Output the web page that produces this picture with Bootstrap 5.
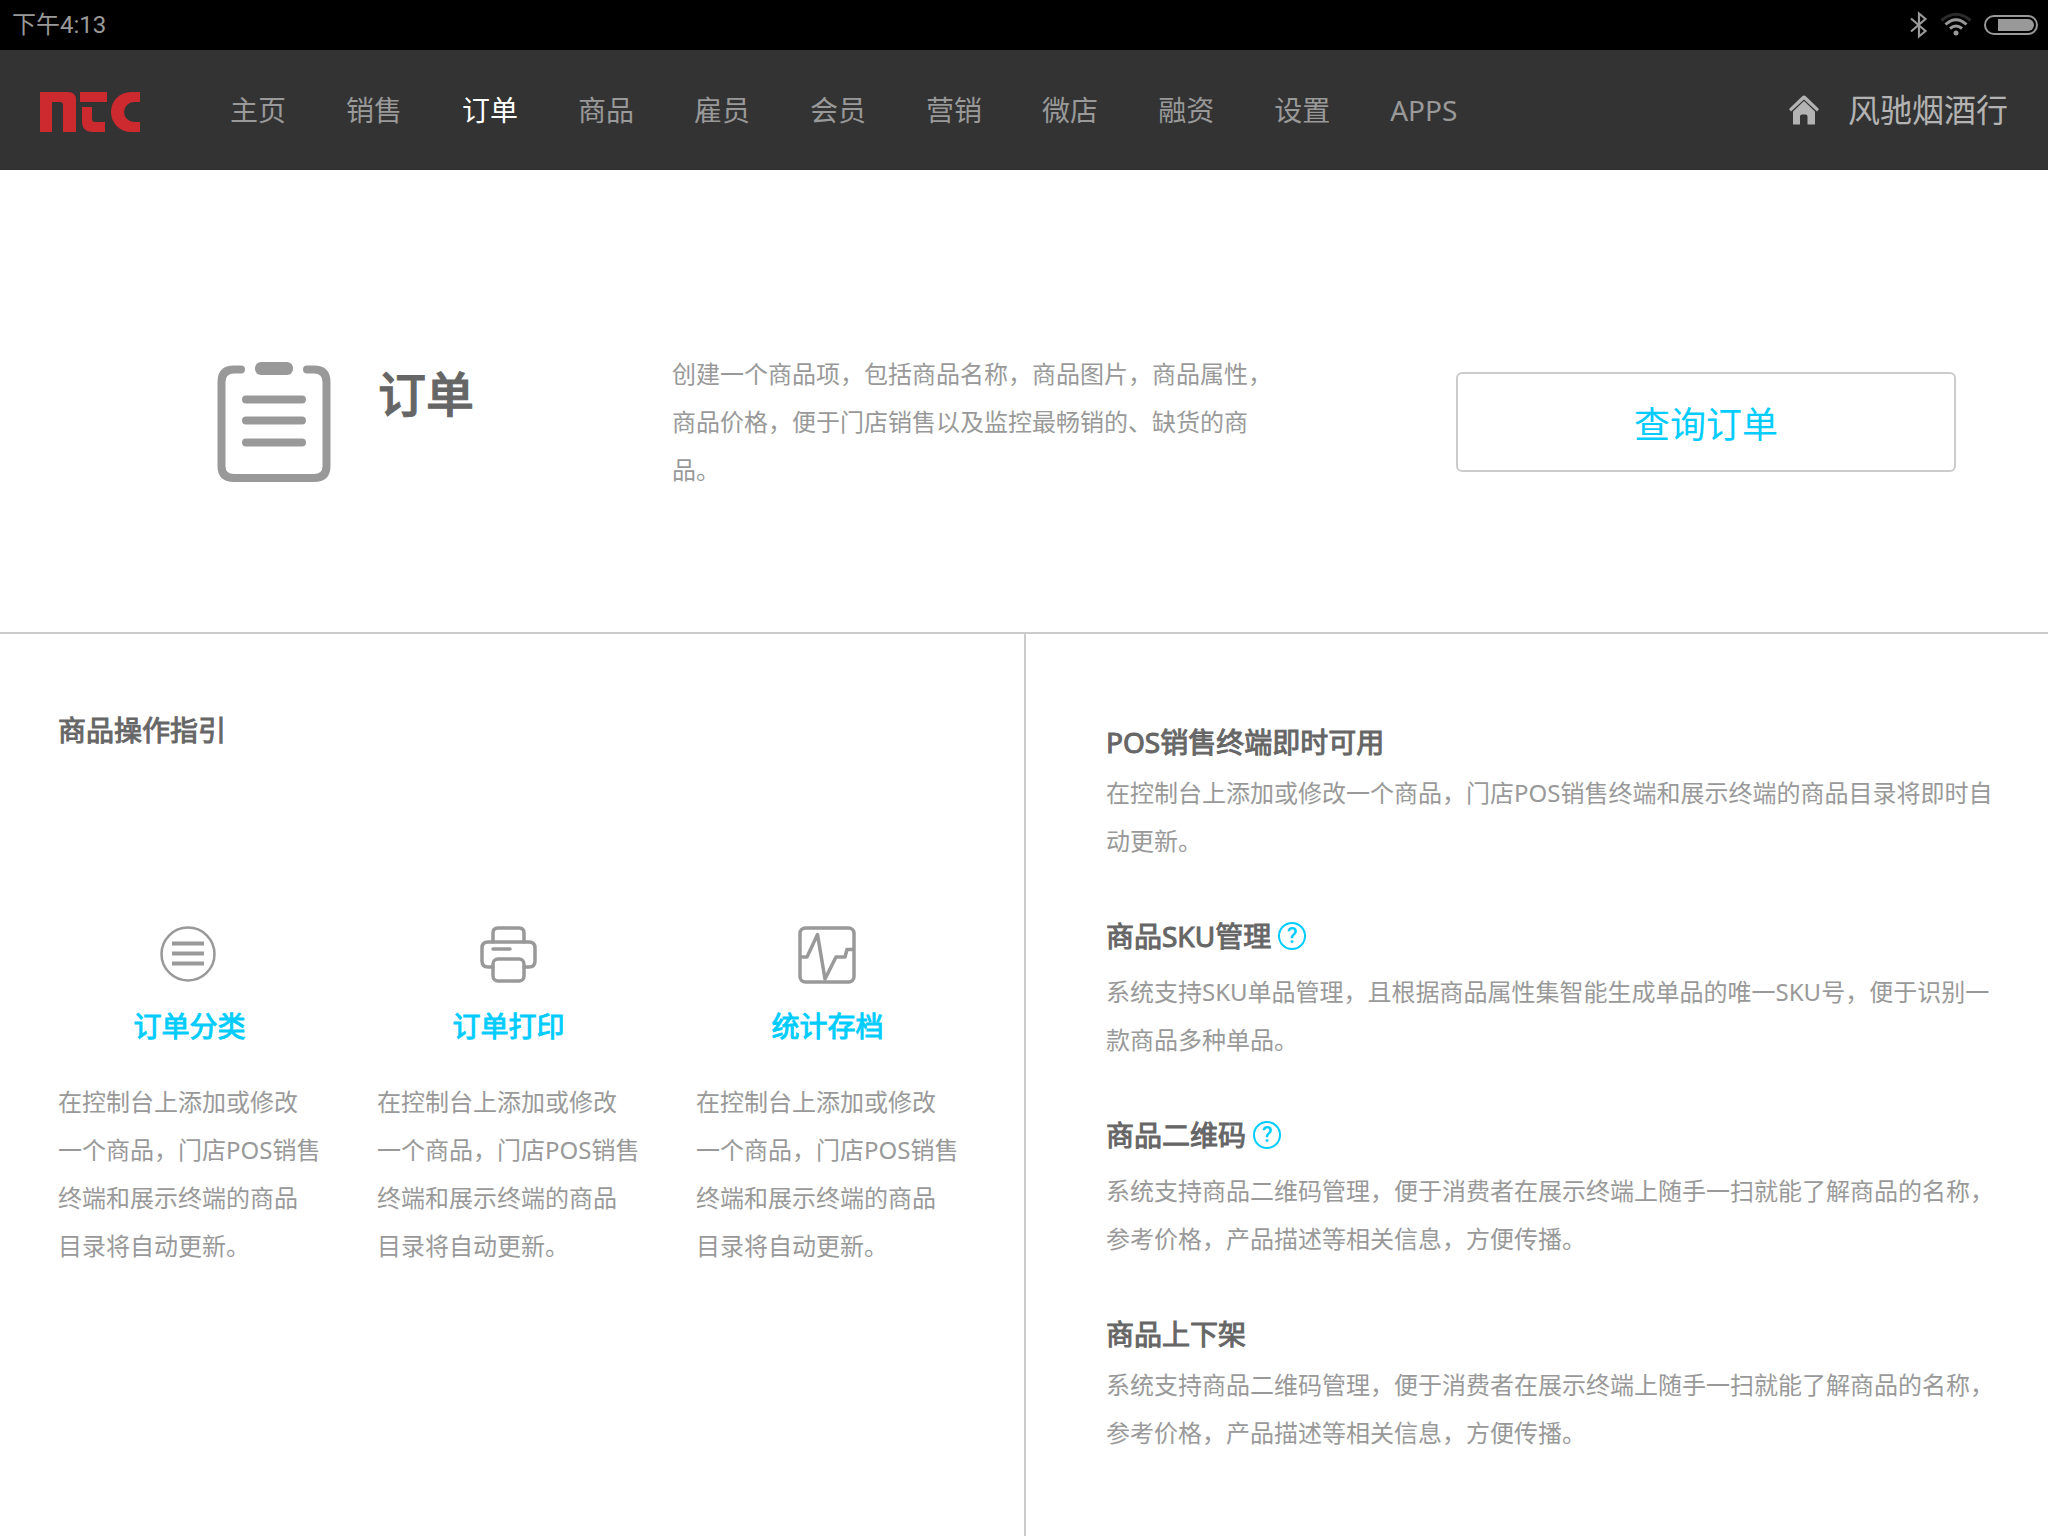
<!DOCTYPE html>
<html lang="zh-CN">
<head>
<meta charset="utf-8">
<meta name="viewport" content="width=device-width, initial-scale=1">
<title>订单</title>
<link href="https://cdn.jsdelivr.net/npm/bootstrap@5.3.0/dist/css/bootstrap.min.css" rel="stylesheet">
<style>
body{font-family:"Noto Sans","Noto Sans CJK SC",sans-serif;font-size:24px;line-height:48px;color:#999;background:#fff}
p{margin:0}
.status-bar{height:50px;background:#000;padding:0 10px 0 12px;font-family:Roboto,"Noto Sans CJK SC",sans-serif;color:#999;line-height:50px}
.top-bar{height:120px;background:#333;padding:0 40px}
.top-menu{margin-left:90px;gap:60px;font-size:28px}
.top-menu .nav-link{padding:0;color:#999}
.top-menu .nav-link.active{color:#fff}
.shop-link{font-size:32px;color:#b3b3b3;gap:28px}
.intro{padding:180px 92px 138px 216px;border-bottom:2px solid #ccc}
.intro-head{width:456px;gap:46px}
.intro-head svg{margin-top:11px}
.intro-head h1{font-size:48px;line-height:64px;color:#666;margin:12px 0 0}
.intro-text{width:600px}
.query-btn{width:500px;height:100px;margin-top:22px;padding:6px 0 0;border:2px solid #ccc;border-radius:6px;font-size:36px;color:#00ccff}
.query-btn:hover{background:#f5fdff;border-color:#ccc;color:#00ccff}
.guide{padding:72px 58px 0}
.notes{padding:84px 48px 72px 80px;border-left:2px solid #ccc}
h1{font-weight:500;-webkit-text-stroke:1px}
h2,h3{font-weight:400;-webkit-text-stroke:1px}
.sub-title{font-size:28px;line-height:48px;color:#666;margin:0}
.step-row{gap:56px;margin-top:170px}
.step-item{width:263px}
.step-item svg{width:60px;height:60px}
.step-item h3{font-size:28px;line-height:48px;margin:18px 0 28px}
.step-item h3 a{color:#00ccff;text-decoration:none}
.note-list{gap:47px}
.note-list .sub-title{margin-bottom:3px}
.note-list .with-help{margin-bottom:8px;gap:7px}
.help-btn{width:28px;height:28px;border:2px solid #00ccff;border-radius:50%;background:none;color:#00ccff;padding:0;font:500 22px/24px Roboto,sans-serif}
</style>
</head>
<body class="min-vh-100 d-flex flex-column">
<div class="status-bar d-flex justify-content-between align-items-center">
  <span>下午4:13</span>
  <div class="d-flex align-items-center">
    <svg width="20" height="28" viewBox="0 0 20 28" fill="none" stroke="#999" stroke-width="2.200" aria-label="蓝牙"><path d="M3 7.500L17.500 20L11 25.500V2.500L17.500 8L3 20.500"/></svg>
    <svg class="ms-2" width="40" height="28" viewBox="0 0 40 28" fill="none" stroke="#999" stroke-width="3" aria-label="无线网络"><path d="M5.500 9.500Q20 -3 34.500 9.500" stroke="#2b2b2b"/><path d="M9.500 13.500Q20 4 30.500 13.500M14 17.500Q20 12.500 26 17.500"/><circle cx="20" cy="22" r="2.500" fill="#999" stroke="none"/></svg>
    <svg class="ms-2" width="54" height="22" viewBox="0 0 54 22" aria-label="电池"><rect x="1" y="2" width="52" height="18" rx="9" fill="none" stroke="#999" stroke-width="2"/><path d="M14 5H44a6 6 0 0 1 0 12H14Z" fill="#999"/></svg>
  </div>
</div>
<nav class="top-bar d-flex align-items-center">
  <a href="#" class="d-flex mt-1" aria-label="NTC">
    <svg width="100" height="40" viewBox="0 0 100 40"><g fill="#cc2a2f"><path d="M0 0H28Q36 0 36 8V40H23V13Q23 10 20 10H12V40H0Z"/><path d="M40 0H67V10H40Z"/><path d="M42 15H52V27Q52 30 55 30H65V40H53Q42 40 42 29Z"/><path d="M100 0H91A20 20 0 0 0 91 40H100V30H94A10 10 0 0 1 94 10H100Z"/></g></svg>
  </a>
  <div class="top-menu nav flex-nowrap">
    <a class="nav-link" href="#">主页</a>
    <a class="nav-link" href="#">销售</a>
    <a class="nav-link active" aria-current="page" href="#">订单</a>
    <a class="nav-link" href="#">商品</a>
    <a class="nav-link" href="#">雇员</a>
    <a class="nav-link" href="#">会员</a>
    <a class="nav-link" href="#">营销</a>
    <a class="nav-link" href="#">微店</a>
    <a class="nav-link" href="#">融资</a>
    <a class="nav-link" href="#">设置</a>
    <a class="nav-link" href="#">APPS</a>
  </div>
  <a href="#" class="shop-link ms-auto d-flex align-items-center text-decoration-none">
    <svg width="32" height="30" viewBox="0 0 32 30" fill="#b3b3b3"><path d="M16 0.500Q17 0.500 18 1.500L31 14L29 16.500L16 4.500L3 16.500L1 14L14 1.500Q15 0.500 16 0.500Z"/><path d="M16 6L5 16.500V29.500H12V21.500Q12 19.500 14 19.500H17.500Q19.500 19.500 19.500 21.500V29.500H27V16.500Z"/></svg>
    <span>风驰烟酒行</span>
  </a>
</nav>
<main class="flex-grow-1 d-flex flex-column">
  <section class="intro d-flex align-items-start">
    <div class="intro-head d-flex align-items-start">
      <svg class="flex-shrink-0" width="116" height="122" viewBox="0 0 116 122" fill="none" stroke="#999" stroke-width="8" stroke-linecap="round"><path d="M25 8.500H18Q5.500 8.500 5.500 21V105Q5.500 117 18 117H98Q110.500 117 110.500 105V21Q110.500 8.500 98 8.500H91"/><rect x="39" y="1" width="38" height="13" rx="6" fill="#999" stroke="none"/><path d="M30 38.500H86M30 59.500H86M30 81.500H86"/></svg>
      <h1>订单</h1>
    </div>
    <p class="intro-text">创建一个商品项，包括商品名称，商品图片，商品属性，商品价格，便于门店销售以及监控最畅销的、缺货的商品。</p>
    <button type="button" class="query-btn btn ms-auto">查询订单</button>
  </section>
  <div class="row g-0 flex-grow-1">
    <section class="guide col-6">
      <h2 class="sub-title">商品操作指引</h2>
      <div class="step-row d-flex">
        <div class="step-item">
          <div class="d-flex justify-content-center"><svg viewBox="0 0 60 60" fill="none" stroke="#999"><circle cx="28" cy="30" r="26.500" stroke-width="2.500"/><path d="M12 19.500H44M12 29.500H44M12 39.500H44" stroke-width="4"/></svg></div>
          <h3 class="text-center"><a href="#">订单分类</a></h3>
          <p>在控制台上添加或修改一个商品，门店POS销售终端和展示终端的商品目录将自动更新。</p>
        </div>
        <div class="step-item">
          <div class="d-flex justify-content-center"><svg viewBox="0 0 60 60" fill="none" stroke="#999" stroke-width="3.500" stroke-linecap="round"><path d="M14 18V9Q14 4 19 4H40Q45 4 45 9V18"/><path d="M14 43H9Q3 43 3 37V24Q3 18 9 18H50Q56 18 56 24V37Q56 43 50 43H45"/><rect x="14" y="35" width="31" height="22" rx="5"/><path d="M14 25H31"/></svg></div>
          <h3 class="text-center"><a href="#">订单打印</a></h3>
          <p>在控制台上添加或修改一个商品，门店POS销售终端和展示终端的商品目录将自动更新。</p>
        </div>
        <div class="step-item">
          <div class="d-flex justify-content-center"><svg viewBox="0 0 60 60" fill="none" stroke="#999" stroke-width="3.500" stroke-linejoin="round"><rect x="2" y="4" width="54" height="54" rx="5.500"/><path d="M3 33H9L19.500 10.500L27 55L38 33H47L49 25.500H55"/></svg></div>
          <h3 class="text-center"><a href="#">统计存档</a></h3>
          <p>在控制台上添加或修改一个商品，门店POS销售终端和展示终端的商品目录将自动更新。</p>
        </div>
      </div>
    </section>
    <section class="notes col-6">
      <div class="note-list d-flex flex-column">
        <article>
          <h2 class="sub-title">POS销售终端即时可用</h2>
          <p>在控制台上添加或修改一个商品，门店POS销售终端和展示终端的商品目录将即时自动更新。</p>
        </article>
        <article>
          <div class="with-help d-flex align-items-center"><h2 class="sub-title mb-0">商品SKU管理</h2><button type="button" class="help-btn" aria-label="商品SKU管理说明">?</button></div>
          <p>系统支持SKU单品管理，且根据商品属性集智能生成单品的唯一SKU号，便于识别一款商品多种单品。</p>
        </article>
        <article>
          <div class="with-help d-flex align-items-center"><h2 class="sub-title mb-0">商品二维码</h2><button type="button" class="help-btn" aria-label="商品二维码说明">?</button></div>
          <p>系统支持商品二维码管理，便于消费者在展示终端上随手一扫就能了解商品的名称，参考价格，产品描述等相关信息，方便传播。</p>
        </article>
        <article>
          <h2 class="sub-title">商品上下架</h2>
          <p>系统支持商品二维码管理，便于消费者在展示终端上随手一扫就能了解商品的名称，参考价格，产品描述等相关信息，方便传播。</p>
        </article>
      </div>
    </section>
  </div>
</main>
<script src="https://cdn.jsdelivr.net/npm/bootstrap@5.3.0/dist/js/bootstrap.bundle.min.js"></script>
</body>
</html>
